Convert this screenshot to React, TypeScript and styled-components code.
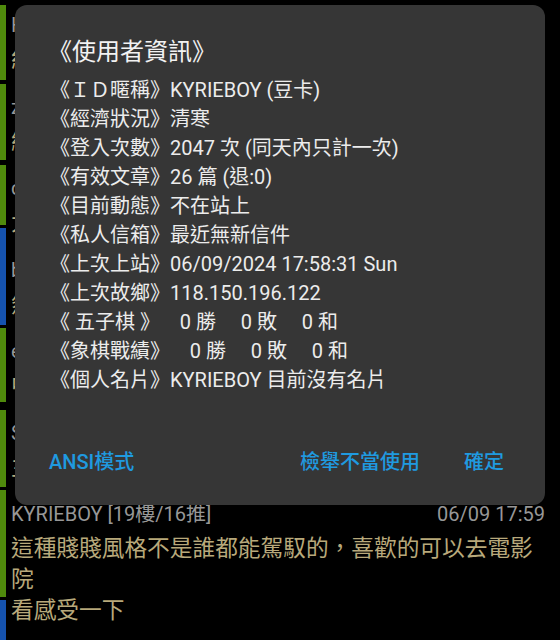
import React from "react";
import styled, { createGlobalStyle } from "styled-components";

const GlobalStyle = createGlobalStyle`
  html, body { margin: 0; padding: 0; background: #000; }
  body { font-family: Roboto, "Noto Sans CJK TC", sans-serif; }
  * { box-sizing: border-box; }
`;

const Screen = styled.div`
  position: relative;
  width: 560px;
  height: 640px;
  overflow: hidden;
  background: #000;
  display: flex;
`;

const Rail = styled.div`
  width: 6px;
  flex: none;
  display: flex;
  flex-direction: column;
  padding-top: 5px;
`;

const RailSegment = styled.div<{ $h: number; $gap: number; $tone: "green" | "blue" }>`
  flex: none;
  height: ${(p) => p.$h}px;
  margin-bottom: ${(p) => p.$gap}px;
  background: ${(p) => (p.$tone === "green" ? "#4f8a0c" : "#1552ad")};
`;

const Feed = styled.div`
  flex: 1;
  min-width: 0;
  padding: 0 15px 0 5px;
`;

const Post = styled.div`
  padding: 10px 0 6.5px;
`;

const PostHead = styled.div`
  display: flex;
  justify-content: space-between;
  font-size: 20px;
  line-height: 30px;
  color: #979797;
  white-space: nowrap;
`;

const PostBody = styled.div`
  margin-top: 4px;
  font-size: 22.7px;
  line-height: 31px;
  color: #b8a97b;
`;

const Dialog = styled.div`
  position: absolute;
  left: 15px;
  top: 5px;
  width: 530px;
  background: #363636;
  border-radius: 12px;
  padding: 30px 0 19px;
  color: #ececec;
`;

const DialogTitle = styled.h2`
  margin: 0;
  padding: 0 33px;
  font-size: 24px;
  line-height: 34px;
  font-weight: 400;
  color: #f2f2f2;
`;

const InfoList = styled.div`
  margin-top: 6.5px;
  padding: 0 35px;
`;

const InfoRow = styled.div`
  font-size: 20px;
  line-height: 29px;
  white-space: pre;
`;

const Actions = styled.div`
  margin-top: 43.5px;
  height: 48px;
  display: flex;
  align-items: center;
  justify-content: space-between;
  padding: 0 41px 0 34px;
`;

const ActionGroup = styled.div`
  display: flex;
  gap: 44px;
`;

const ActionButton = styled.button`
  background: none;
  border: 0;
  padding: 0;
  font: 500 20px/48px Roboto, "Noto Sans CJK TC", sans-serif;
  color: #1f9ae0;
  cursor: pointer;
`;

const rail: { h: number; gap: number; tone: "green" | "blue" }[] = [
  { h: 75, gap: 4, tone: "green" },
  { h: 76, gap: 5, tone: "green" },
  { h: 60, gap: 3, tone: "green" },
  { h: 97, gap: 3, tone: "blue" },
  { h: 74, gap: 8, tone: "green" },
  { h: 77, gap: 3, tone: "green" },
  { h: 107, gap: 3, tone: "green" },
  { h: 60, gap: 0, tone: "blue" },
];

const hiddenPosts = [
  { user: "Hsuanchi [13樓/10推]", time: "06/09 17:41", text: "紅到不行的片子現在還有人在看" },
  { user: "zxcvb123 [14樓/11推]", time: "06/09 17:45", text: "網路上的評價兩極" },
  { user: "cherry77 [15樓/12推]", time: "06/09 17:48", text: "大家都看得很開心吧" },
  { user: "blueSky [16樓/13推]", time: "06/09 17:50", text: "然後就沒有然後了" },
  { user: "eric0930 [17樓/14推]", time: "06/09 17:53", text: "中間那段真的很好笑" },
  { user: "Sunnyday [18樓/15推]", time: "06/09 17:56", text: "主角演技還不錯" },
];

const info = [
  "《ＩＤ暱稱》KYRIEBOY (豆卡)",
  "《經濟狀況》清寒",
  "《登入次數》2047 次 (同天內只計一次)",
  "《有效文章》26 篇 (退:0)",
  "《目前動態》不在站上",
  "《私人信箱》最近無新信件",
  "《上次上站》06/09/2024 17:58:31 Sun",
  "《上次故鄉》118.150.196.122",
  "《 五子棋 》    0 勝     0 敗     0 和",
  "《象棋戰績》    0 勝     0 敗     0 和",
  "《個人名片》KYRIEBOY 目前沒有名片",
];

export default function App() {
  return (
    <>
      <GlobalStyle />
      <Screen>
        <Rail>
          {rail.map((s, i) => (
            <RailSegment key={i} $h={s.h} $gap={s.gap} $tone={s.tone} />
          ))}
        </Rail>
        <Feed>
          {hiddenPosts.map((p) => (
            <Post key={p.user}>
              <PostHead>
                <span>{p.user}</span>
                <span>{p.time}</span>
              </PostHead>
              <PostBody>{p.text}</PostBody>
            </Post>
          ))}
          <Post>
            <PostHead>
              <span>KYRIEBOY [19樓/16推]</span>
              <span>06/09 17:59</span>
            </PostHead>
            <PostBody>
              這種賤賤風格不是誰都能駕馭的，喜歡的可以去電影院
              <br />
              看感受一下
            </PostBody>
          </Post>
        </Feed>
        <Dialog role="dialog">
          <DialogTitle>《使用者資訊》</DialogTitle>
          <InfoList>
            {info.map((line) => (
              <InfoRow key={line}>{line}</InfoRow>
            ))}
          </InfoList>
          <Actions>
            <ActionButton>ANSI模式</ActionButton>
            <ActionGroup>
              <ActionButton>檢舉不當使用</ActionButton>
              <ActionButton>確定</ActionButton>
            </ActionGroup>
          </Actions>
        </Dialog>
      </Screen>
    </>
  );
}
